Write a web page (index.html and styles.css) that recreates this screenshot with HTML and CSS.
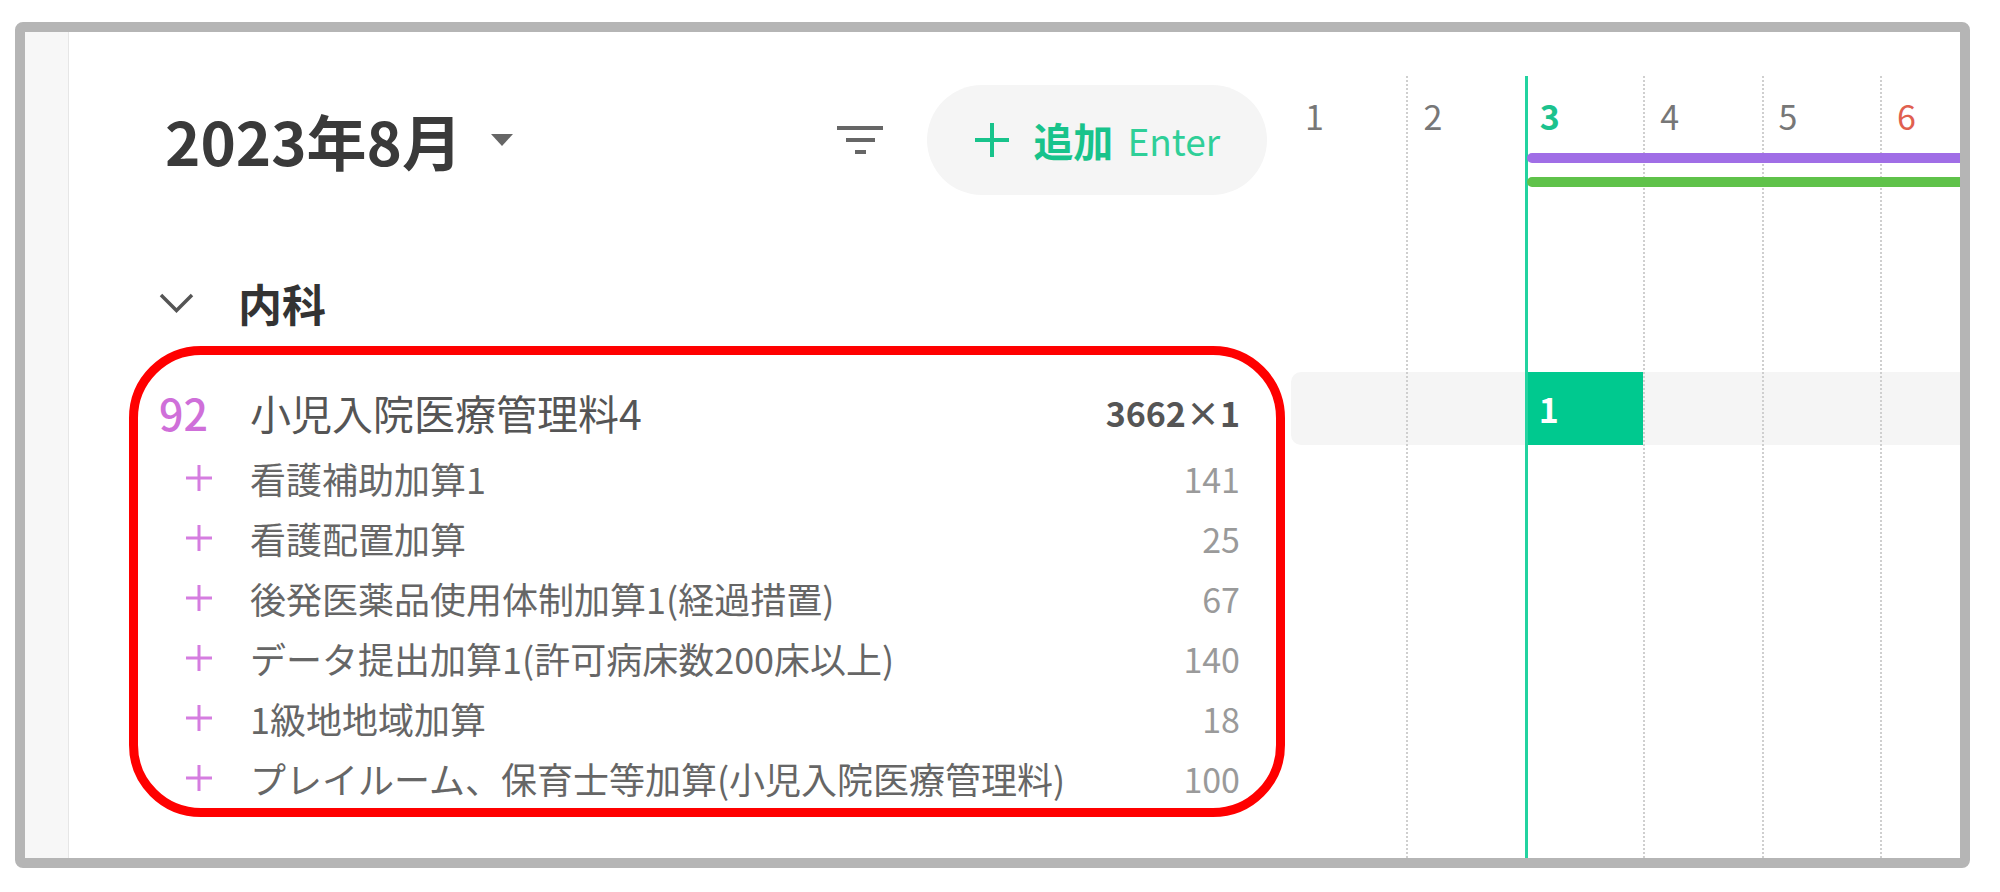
FILE: index.html
```html
<!DOCTYPE html>
<html lang="ja">
<head>
  <meta charset="UTF-8" />
  <meta name="viewport" content="width=device-width, initial-scale=1.0"/>
  <title>算定カレンダー</title>
  <link rel="stylesheet" href="styles.css">
</head>
<body>

  <div class="frame">
    <aside class="rail"></aside>

    <main class="panel">
      <header class="toolbar">
        <button class="month">2023年8月<span class="caret"></span></button>
        <div class="tools">
          <button class="filter" aria-label="filter">
            <svg width="46" height="28" viewBox="0 0 46 28"><path d="M0 2h46M9 14h29M18 26h11" stroke="#666" stroke-width="4"/></svg>
          </button>
          <button class="add">
            <svg width="36" height="36" viewBox="0 0 36 36"><path d="M18 1v34M1 18h34" stroke="currentColor" stroke-width="4"/></svg>
            <b>追加</b><span class="key">Enter</span>
          </button>
        </div>
      </header>

      <section class="group">
        <h2 class="group-title">
          <svg width="35" height="20" viewBox="0 0 35 20"><path d="M2 2l15.5 15.5L33 2" fill="none" stroke="#555" stroke-width="3.5"/></svg>
          内科
        </h2>

        <div class="entries">
          <div class="entry main">
            <span class="count">92</span>
            <span class="name">小児入院医療管理料4</span>
            <span class="value">3662×1</span>
          </div>
          <div class="entry">
            <span class="mark"><svg width="26" height="26" viewBox="0 0 26 26"><path d="M13 0v26M0 13h26" stroke="currentColor" stroke-width="3"/></svg></span>
            <span class="name">看護補助加算1</span>
            <span class="value">141</span>
          </div>
          <div class="entry">
            <span class="mark"><svg width="26" height="26" viewBox="0 0 26 26"><path d="M13 0v26M0 13h26" stroke="currentColor" stroke-width="3"/></svg></span>
            <span class="name">看護配置加算</span>
            <span class="value">25</span>
          </div>
          <div class="entry">
            <span class="mark"><svg width="26" height="26" viewBox="0 0 26 26"><path d="M13 0v26M0 13h26" stroke="currentColor" stroke-width="3"/></svg></span>
            <span class="name">後発医薬品使用体制加算1(経過措置)</span>
            <span class="value">67</span>
          </div>
          <div class="entry">
            <span class="mark"><svg width="26" height="26" viewBox="0 0 26 26"><path d="M13 0v26M0 13h26" stroke="currentColor" stroke-width="3"/></svg></span>
            <span class="name">データ提出加算1(許可病床数200床以上)</span>
            <span class="value">140</span>
          </div>
          <div class="entry">
            <span class="mark"><svg width="26" height="26" viewBox="0 0 26 26"><path d="M13 0v26M0 13h26" stroke="currentColor" stroke-width="3"/></svg></span>
            <span class="name">1級地地域加算</span>
            <span class="value">18</span>
          </div>
          <div class="entry">
            <span class="mark"><svg width="26" height="26" viewBox="0 0 26 26"><path d="M13 0v26M0 13h26" stroke="currentColor" stroke-width="3"/></svg></span>
            <span class="name">プレイルーム、保育士等加算(小児入院医療管理料)</span>
            <span class="value">100</span>
          </div>
        </div>
      </section>

      <div class="highlight"></div>
    </main>

    <div class="calendar">
      <div class="grid-lines">
        <span></span><span></span><span class="today"></span><span></span><span></span><span></span>
      </div>
      <div class="days">
        <span>1</span><span>2</span><span class="today">3</span><span>4</span><span>5</span><span class="sun">6</span>
      </div>
      <div class="bar purple"></div>
      <div class="bar green"></div>
      <div class="track">
        <div class="cell">1</div>
      </div>
    </div>
  </div>

</body>
</html>
```

FILE: styles.css
```css
* {
  box-sizing: border-box;
  margin: 0;
  padding: 0;
}

body {
  font-family: "Noto Sans CJK JP", "Noto Sans", sans-serif;
  background: #fff;
  color: #333;
}

button {
  font: inherit;
  border: none;
  background: none;
  color: inherit;
}

.frame {
  display: flex;
  width: 1955px;
  height: 846px;
  margin: 22px 0 0 15px;
  border: 10px solid #b5b5b5;
  border-radius: 8px;
  overflow: hidden;
}

.rail {
  width: 44px;
  flex-shrink: 0;
  background: #f7f7f7;
  border-right: 1px solid #e6e6e6;
}

/* left list */
.panel {
  position: relative;
  width: 1219px;
  flex-shrink: 0;
}

.toolbar {
  display: flex;
  align-items: center;
  height: 110px;
  margin-top: 53px;
  padding: 0 21px 0 96px;
}

.month {
  display: flex;
  align-items: center;
  font-size: 60px;
  font-weight: 700;
  color: #3a3a3a;
  line-height: 1;
}

.caret {
  margin-left: 29px;
  border-left: 11px solid transparent;
  border-right: 11px solid transparent;
  border-top: 12px solid #666;
}

.tools {
  display: flex;
  align-items: center;
  gap: 44px;
  margin-left: auto;
}

.filter {
  display: flex;
}

.add {
  display: flex;
  align-items: center;
  height: 110px;
  padding: 0 47px;
  border-radius: 55px;
  background: #f5f5f5;
  color: #18c38b;
}

.add b {
  margin-left: 23px;
  font-size: 40px;
  font-weight: 700;
}

.add .key {
  margin-left: 14px;
  font-size: 37px;
  color: #2fcf98;
}

.group {
  padding-left: 90px;
  padding-right: 48px;
}

.group-title {
  display: flex;
  align-items: center;
  gap: 44px;
  height: 44px;
  margin-top: 86px;
  font-size: 44px;
  font-weight: 700;
  color: #333;
}

.entries {
  margin-top: 57px;
}

.entry {
  display: flex;
  align-items: center;
  height: 60px;
  font-size: 36px;
  color: #666;
}

.entry .mark {
  display: flex;
  width: 91px;
  padding-left: 27px;
  color: #d57de0;
}

.entry .value {
  margin-left: auto;
  font-size: 34px;
  color: #9a9a9a;
}

.entry.main {
  margin-bottom: 6px;
  font-size: 41px;
  color: #555;
}

.count {
  width: 91px;
  font-size: 43px;
  font-weight: 500;
  color: #cf6fd9;
}

.entry.main .value {
  font-weight: 600;
  color: #555;
}

.highlight {
  position: absolute;
  left: 60px;
  top: 314px;
  width: 1156px;
  height: 471px;
  border: 9px solid #ff0000;
  border-radius: 72px;
}

/* calendar */
.calendar {
  --day: 118.4px;
  position: relative;
  flex: 1;
  overflow: hidden;
}

.grid-lines {
  position: absolute;
  top: 44px;
  bottom: 0;
  left: 0;
  display: grid;
  grid-template-columns: repeat(6, var(--day));
  z-index: 1;
}

.grid-lines span {
  border-left: 2px dotted #cfcfcf;
}

.grid-lines span:first-child {
  border-left: none;
}

.grid-lines .today {
  border-left: 3px solid #22d3a0;
}

.days {
  display: grid;
  grid-template-columns: repeat(6, var(--day));
  margin-top: 64px;
  font-size: 34px;
  line-height: 40px;
  color: #777;
}

.days span {
  padding-left: 17px;
}

.days .today {
  padding-left: 15px;
  color: #1cc28e;
  font-weight: 700;
}

.days .sun {
  color: #e0604f;
}

.bar {
  position: relative;
  z-index: 2;
  height: 10px;
  margin-left: calc(var(--day) * 2 + 2px);
  border-radius: 5px 0 0 5px;
}

.purple {
  margin-top: 17px;
  background: #a06ee6;
}

.green {
  margin-top: 14px;
  background: #5fc24a;
}

.track {
  display: flex;
  height: 73px;
  margin: 185px 0 0 3px;
  border-radius: 10px 0 0 10px;
  background: #f5f5f5;
}

.cell {
  width: 118px;
  margin-left: calc(var(--day) * 2 - 3px);
  padding-left: 14px;
  background: #00c98f;
  color: #fff;
  font-size: 34px;
  font-weight: 700;
  line-height: 73px;
}
```
